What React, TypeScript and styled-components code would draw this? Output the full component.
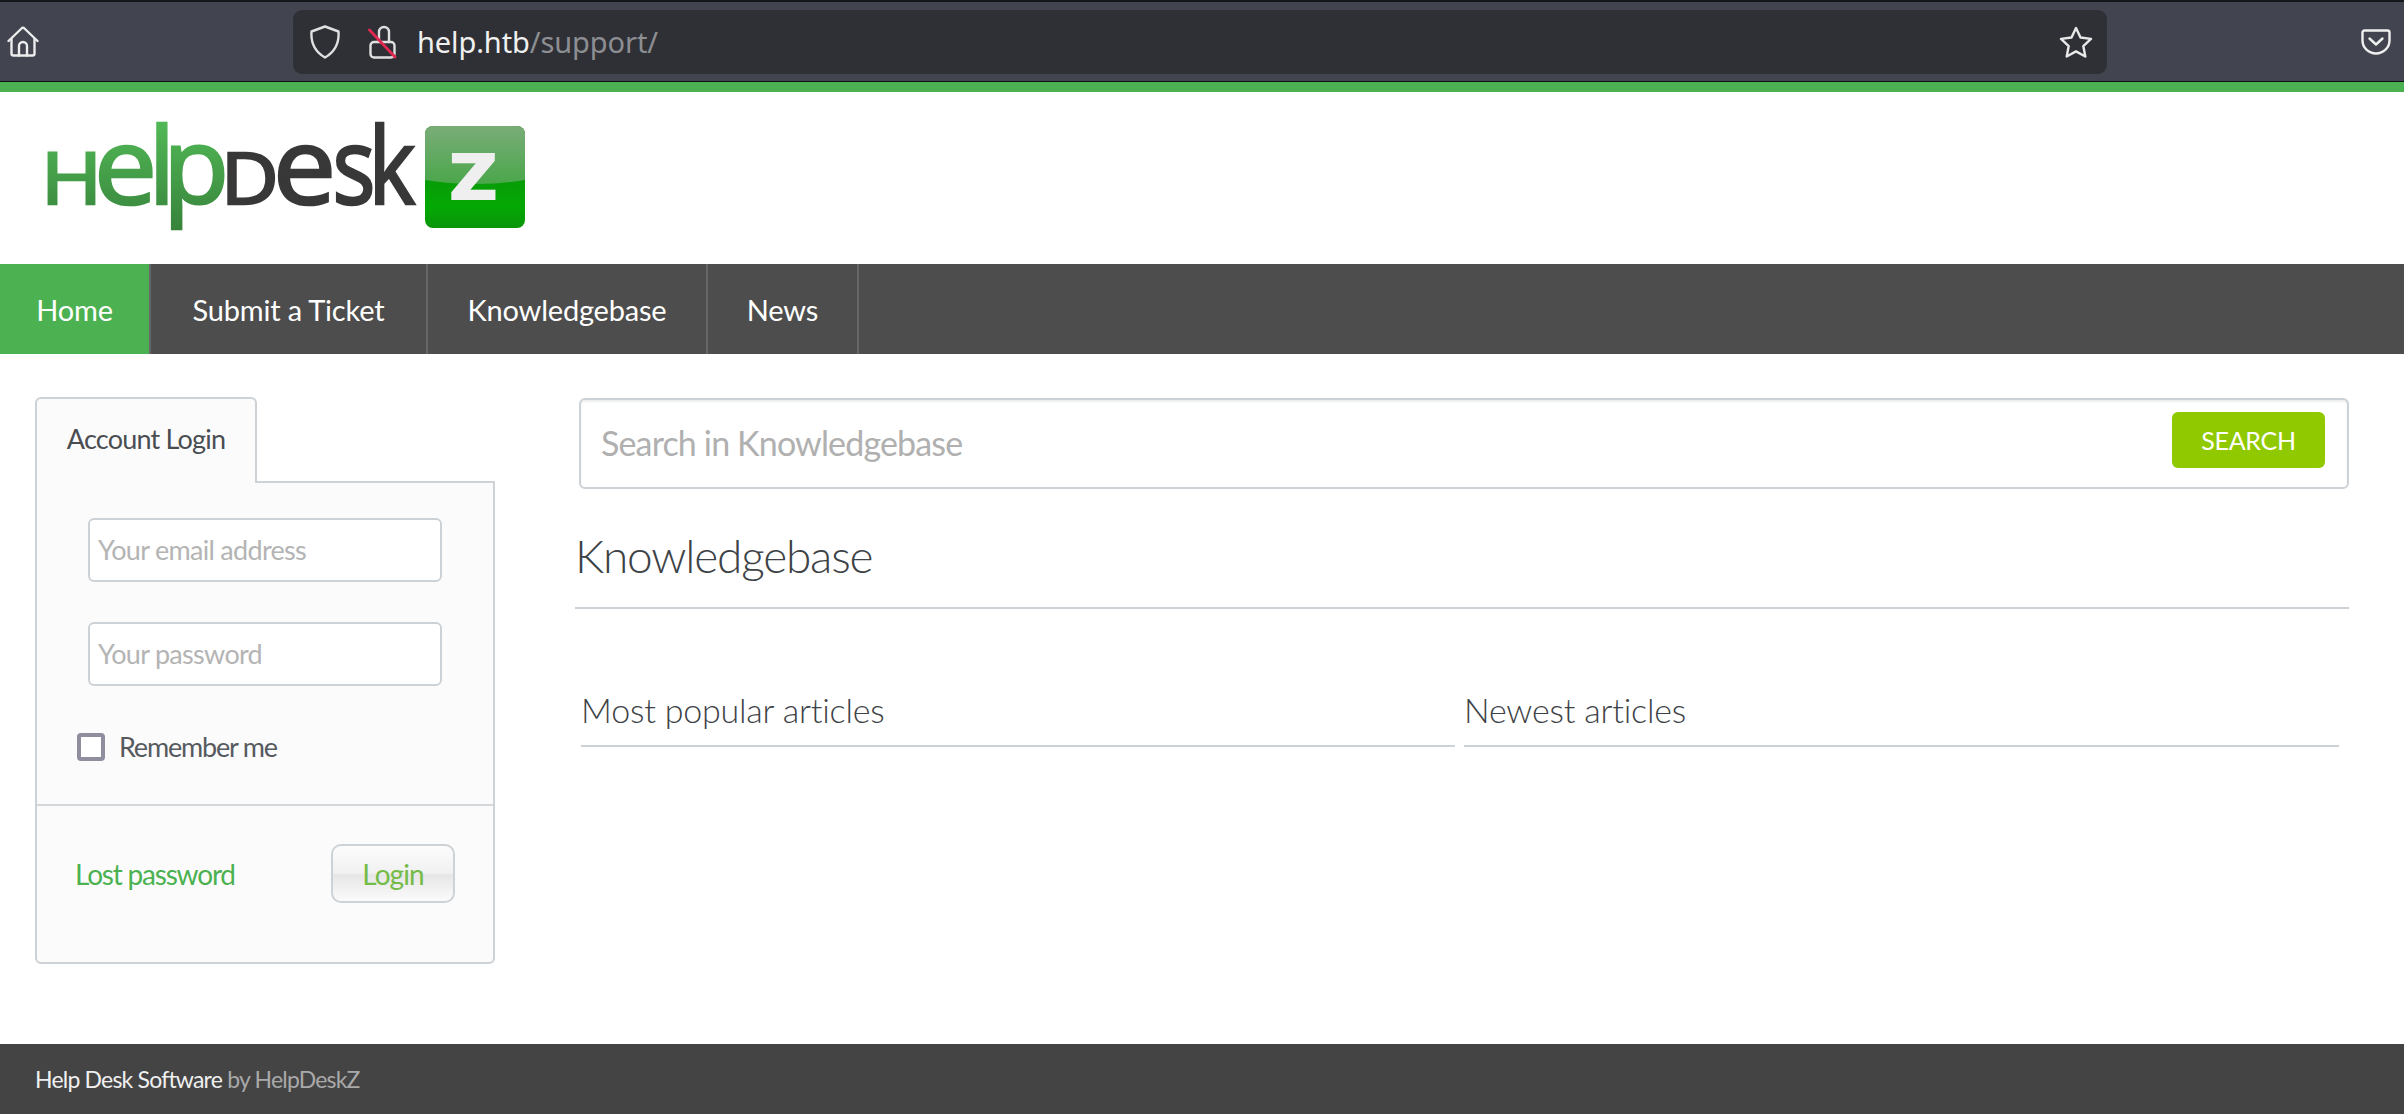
import React from 'react';
import styled, { createGlobalStyle } from 'styled-components';

const GlobalStyle = createGlobalStyle`
  * { box-sizing: border-box; }
  html, body { margin: 0; padding: 0; background: #fff; }
  body { font-family: Lato, "Open Sans", sans-serif; color: #43484d; overflow: hidden; }
`;

// logo letters, each squeezed or stretched to the width it has in the logo
const logoLetters = [
  { ch: 'H', x: -7, size: 72, sx: 1.15, fill: 'url(#helpInk)' },
  { ch: 'e', x: 46, size: 106, sx: 1.06, fill: 'url(#helpInk)' },
  { ch: 'l', x: 100.5, size: 106, sx: 1, fill: 'url(#helpInk)' },
  { ch: 'p', x: 115, size: 106, sx: 1.02, fill: 'url(#helpInk)' },
  { ch: 'D', x: 173, size: 72, sx: 1.1, fill: '#383838' },
  { ch: 'e', x: 225, size: 106, sx: 1.06, fill: '#383838' },
  { ch: 's', x: 284.5, size: 106, sx: 0.85, fill: '#383838' },
  { ch: 'k', x: 320.5, size: 106, sx: 0.84, fill: '#383838' },
];

const HelpDeskLogo = () => (
  <LogoSvg width="480" height="108" viewBox="0 0 480 108">
    <defs>
      <linearGradient id="helpInk" gradientUnits="userSpaceOnUse" x1="0" y1="-78" x2="0" y2="26">
        <stop offset="0" stopColor="#51b755" />
        <stop offset="1" stopColor="#37833b" />
      </linearGradient>
      <linearGradient id="zTop" x1="0" y1="0" x2="0" y2="1">
        <stop offset="0" stopColor="#7aac78" />
        <stop offset="1" stopColor="#4aa74b" />
      </linearGradient>
      <linearGradient id="zBottom" x1="0" y1="0" x2="0" y2="1">
        <stop offset="0" stopColor="#0d850d" />
        <stop offset="0.8" stopColor="#04a804" />
        <stop offset="1" stopColor="#0a950a" />
      </linearGradient>
    </defs>
    {logoLetters.map((l, i) => (
      <LogoLetter
        key={i}
        transform={`translate(${l.x} 78) scale(${l.sx} 1)`}
        fontSize={l.size}
        fill={l.fill}
        stroke={l.fill}
        strokeWidth="2.6"
      >
        {l.ch}
      </LogoLetter>
    ))}
    <rect x="377" y="0" width="100" height="102" rx="8" fill="url(#zBottom)" />
    <path d="M377 8a8 8 0 0 1 8-8h84a8 8 0 0 1 8 8v46q-50 8-100 0z" fill="url(#zTop)" />
    <LogoZ transform="translate(401 74) scale(1.2 1)" fontSize="66" fill="#efefef">Z</LogoZ>
  </LogoSvg>
);

const HomeIcon = () => (
  <svg width="32" height="32" viewBox="0 0 32 32" fill="none" stroke="#ececec" strokeWidth="2.4" strokeLinejoin="round" strokeLinecap="round">
    <path d="M1.5 15 14.5 2.5a2 2 0 0 1 3 0L30.500 15" />
    <path d="M4.500 13v14.500a2 2 0 0 0 2 2h19a2 2 0 0 0 2-2V13" />
    <path d="M12 29.500V20a4 4 0 0 1 8 0v9.500" />
  </svg>
);

const ShieldIcon = () => (
  <svg width="30" height="34" viewBox="0 0 30 34" fill="none" stroke="#e0e0e0" strokeWidth="2.400" strokeLinejoin="round">
    <path d="M15 1.500 28.500 6.500c.8 11-3 20-13.500 26C4.500 26.500.7 17.500 1.500 6.500z" />
  </svg>
);

const BrokenLockIcon = () => (
  <svg width="30" height="34" viewBox="0 0 30 34" fill="none" strokeLinecap="round">
    <path d="M11 17V7a5 5 0 0 1 10 0v10" stroke="#e0e0e0" strokeWidth="2.400" />
    <rect x="2.500" y="17" width="24" height="15.500" rx="3.500" stroke="#e0e0e0" strokeWidth="2.400" />
    <path d="M1.500 5 27 32" stroke="#e22850" strokeWidth="2.800" />
  </svg>
);

const StarIcon = () => (
  <svg width="34" height="32" viewBox="0 0 34 32" fill="none" stroke="#e8e8e8" strokeWidth="2.400" strokeLinejoin="round">
    <path d="M17 2l4.500 9.500 10.500 1.400-7.700 7.200 2 10.400L17 25.400 7.700 30.500l2-10.400L2 12.900l10.500-1.400z" />
  </svg>
);

const PocketIcon = () => (
  <svg width="30" height="26" viewBox="0 0 30 26" fill="none" stroke="#f0f0f0" strokeWidth="2.400" strokeLinecap="round" strokeLinejoin="round">
    <path d="M3.500 1.500h23a2 2 0 0 1 2 2v8a13.500 13 0 0 1-27 0v-8a2 2 0 0 1 2-2z" />
    <path d="M8.500 9.500 15 15.500l6.500-6" />
  </svg>
);

const navItems = ['Home', 'Submit a Ticket', 'Knowledgebase', 'News'];

const App = () => {
  return (
    <Page>
      <GlobalStyle />
      <BrowserBar>
        <HomeSlot><HomeIcon /></HomeSlot>
        <UrlBar>
          <ShieldIcon />
          <BrokenLockIcon />
          <UrlText>help.htb<UrlPath>/support/</UrlPath></UrlText>
          <StarIcon />
        </UrlBar>
        <PocketSlot><PocketIcon /></PocketSlot>
      </BrowserBar>
      <Header><HelpDeskLogo /></Header>
      <Nav>
        {navItems.map((item, i) => (
          <NavItem key={item} $active={i === 0} $width={[151, 277, 280, 151][i]}>{item}</NavItem>
        ))}
      </Nav>
      <Main>
        <Sidebar>
          <Tab>Account Login</Tab>
          <Panel>
            <PanelFields>
              <Field placeholder="Your email address" />
              <Field placeholder="Your password" type="password" />
              <RememberRow>
                <CheckBox />
                <RememberLabel>Remember me</RememberLabel>
              </RememberRow>
            </PanelFields>
            <PanelActions>
              <LostLink>Lost password</LostLink>
              <LoginButton>Login</LoginButton>
            </PanelActions>
          </Panel>
        </Sidebar>
        <Content>
          <SearchBox>
            <SearchInput placeholder="Search in Knowledgebase" />
            <SearchButton>SEARCH</SearchButton>
          </SearchBox>
          <PageTitle>Knowledgebase</PageTitle>
          <Columns>
            <ColumnTitle>Most popular articles</ColumnTitle>
            <ColumnTitle>Newest articles</ColumnTitle>
          </Columns>
        </Content>
      </Main>
      <Footer>
        Help Desk Software&nbsp;<FooterMuted>by HelpDeskZ</FooterMuted>
      </Footer>
    </Page>
  );
};

export default App;

const Page = styled.div`
  width: 2404px;
  height: 1114px;
  display: flex;
  flex-direction: column;
`;

const BrowserBar = styled.div`
  height: 82px;
  flex: none;
  display: flex;
  align-items: center;
  background: #42454f;
  border-top: 2px solid #15171b;
  border-bottom: 1px solid #101114;
`;

const HomeSlot = styled.div`
  width: 293px;
  flex: none;
  display: flex;
  padding: 0 0 0 7px;
`;

const UrlBar = styled.div`
  width: 1814px;
  height: 64px;
  flex: none;
  display: flex;
  align-items: center;
  padding: 0 14px 0 17px;
  background: #2f3036;
  border-radius: 9px;
  svg:nth-child(2) {
    margin-left: 28px;
  }
`;

const UrlText = styled.div`
  flex: 1;
  padding-left: 19px;
  font-family: "Noto Sans", sans-serif;
  font-size: 29px;
  letter-spacing: -0.1px;
  color: #f0f0f0;
`;

const UrlPath = styled.span`
  color: #8d8e92;
`;

const PocketSlot = styled.div`
  flex: 1;
  display: flex;
  justify-content: flex-end;
  padding-right: 13px;
`;

const Header = styled.header`
  height: 182px;
  flex: none;
  padding-top: 34px;
  padding-left: 48px;
  background: #fff;
  border-top: 10px solid #4bb151;
`;

const LogoSvg = styled.svg`
  display: block;
  overflow: visible;
  filter: blur(0.7px);
`;

const LogoLetter = styled.text`
  font-family: "Open Sans", sans-serif;
  font-weight: 500;
`;

const LogoZ = styled.text`
  font-family: "Open Sans", sans-serif;
  font-weight: 800;
`;

const Nav = styled.nav`
  height: 90px;
  flex: none;
  display: flex;
  background: #4d4d4d;
`;

const NavItem = styled.a<{ $active: boolean; $width: number }>`
  width: ${(p) => p.$width}px;
  display: flex;
  align-items: center;
  justify-content: center;
  font-size: 29px;
  font-weight: 400;
  letter-spacing: -0.2px;
  color: #fff;
  background: ${(p) => (p.$active ? '#4bb151' : 'transparent')};
  border-right: 2px solid #666;
`;

const Main = styled.main`
  flex: 1;
  display: flex;
  padding: 43px 55px 0 35px;
  background: #fff;
`;

const Sidebar = styled.aside`
  width: 460px;
  flex: none;
  display: flex;
  flex-direction: column;
  align-items: flex-start;
`;

const Tab = styled.div`
  width: 222px;
  height: 86px;
  margin-bottom: -2px;
  padding-bottom: 5px;
  position: relative;
  z-index: 1;
  display: flex;
  align-items: center;
  justify-content: center;
  font-size: 27px;
  font-weight: 400;
  letter-spacing: -0.8px;
  color: #4a4e52;
  background: #fbfbfb;
  border: 2px solid #cdd2d6;
  border-bottom: none;
  border-radius: 6px 6px 0 0;
`;

const Panel = styled.div`
  width: 460px;
  height: 483px;
  display: flex;
  flex-direction: column;
  background: #fbfbfb;
  border: 2px solid #cdd2d6;
  border-radius: 0 0 6px 6px;
`;

const PanelFields = styled.div`
  height: 323px;
  flex: none;
  display: flex;
  flex-direction: column;
  gap: 40px;
  padding: 35px 0 0 51px;
  border-bottom: 2px solid #d3d7da;
`;

const Field = styled.input`
  width: 354px;
  height: 64px;
  flex: none;
  padding: 0 8px 2px;
  font-family: Lato, sans-serif;
  font-size: 27px;
  font-weight: 400;
  letter-spacing: -0.7px;
  background: #fff;
  border: 2px solid #cdd2d6;
  border-radius: 6px;
  outline: none;
  &::placeholder {
    color: #b4b4b4;
    opacity: 1;
  }
`;

const RememberRow = styled.label`
  display: flex;
  align-items: center;
  gap: 14px;
  margin: 4px 0 0 -11px;
`;

const CheckBox = styled.span`
  width: 28px;
  height: 28px;
  flex: none;
  background: #fff;
  border: 4px solid #8e8e9e;
  border-radius: 4px;
`;

const RememberLabel = styled.span`
  font-size: 27px;
  letter-spacing: -1.2px;
  color: #565a5f;
`;

const PanelActions = styled.div`
  display: flex;
  justify-content: space-between;
  align-items: flex-start;
  padding: 38px 38px 0 38px;
`;

const LostLink = styled.a`
  height: 59px;
  display: flex;
  align-items: center;
  font-size: 28px;
  letter-spacing: -1.2px;
  color: #4bb151;
`;

const LoginButton = styled.button`
  width: 124px;
  height: 59px;
  padding: 0;
  font-family: Lato, sans-serif;
  font-size: 28px;
  letter-spacing: -0.9px;
  color: #74bb47;
  background: linear-gradient(#fcfcfc 0%, #f0f0f0 50%, #e6e6e6 52%, #fbfbfb 100%);
  border: 2px solid #cdd2d6;
  border-radius: 10px;
`;

const Content = styled.section`
  flex: 1;
  margin-left: 80px;
  display: flex;
  flex-direction: column;
`;

const SearchBox = styled.div`
  width: 1770px;
  height: 91px;
  margin: 1px 0 0 4px;
  flex: none;
  display: flex;
  align-items: center;
  padding: 0 22px 0 20px;
  background: #fff;
  border: 2px solid #cdd2d6;
  border-radius: 6px;
  box-shadow: inset 0 2px 2px #eceeef;
`;

const SearchInput = styled.input`
  flex: 1;
  border: none;
  outline: none;
  padding: 0 0 2px;
  font-family: Lato, sans-serif;
  font-size: 34px;
  font-weight: 400;
  letter-spacing: -0.85px;
  background: transparent;
  &::placeholder {
    color: #b0b0b0;
    opacity: 1;
  }
`;

const SearchButton = styled.button`
  width: 153px;
  height: 56px;
  flex: none;
  margin-bottom: 7px;
  padding: 0;
  font-family: Lato, sans-serif;
  font-size: 25px;
  font-weight: 400;
  letter-spacing: -0.3px;
  color: #fff;
  background: #91c900;
  border: none;
  border-radius: 6px;
`;

const PageTitle = styled.h1`
  height: 120px;
  flex: none;
  margin: 0;
  padding-top: 14px;
  display: flex;
  align-items: center;
  font-size: 46px;
  font-weight: 300;
  letter-spacing: -1.2px;
  color: #3d4246;
  border-bottom: 2px solid #cdd2d6;
`;

const Columns = styled.div`
  display: grid;
  grid-template-columns: 874px 875px;
  column-gap: 9px;
  padding: 0 6px;
  margin-top: 70px;
`;

const ColumnTitle = styled.h2`
  height: 68px;
  margin: 0;
  padding-bottom: 5px;
  display: flex;
  align-items: center;
  font-size: 34px;
  font-weight: 300;
  letter-spacing: -0.2px;
  color: #3d4246;
  border-bottom: 2px solid #cdd2d6;
`;

const Footer = styled.footer`
  height: 70px;
  flex: none;
  display: flex;
  align-items: center;
  padding-left: 35px;
  font-size: 23px;
  letter-spacing: -0.8px;
  color: #f0f0f0;
  background: #444444;
`;

const FooterMuted = styled.span`
  color: #a9a9a9;
`;
